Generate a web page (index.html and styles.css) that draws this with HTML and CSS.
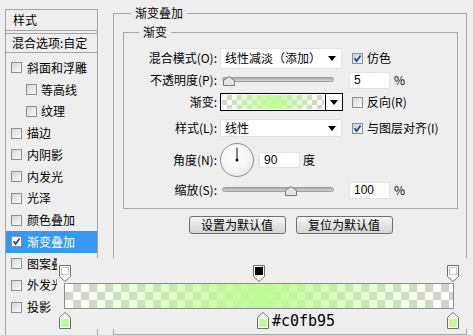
FILE: index.html
```html
<!DOCTYPE html>
<html lang="zh-CN">
<head>
<meta charset="utf-8">
<title>图层样式 - 渐变叠加</title>
<link rel="stylesheet" href="styles.css">
</head>
<body>
<div class="dialog">
  <div class="side">
    <div class="side-head">样式</div>
    <div class="side-blend">混合选项:自定</div>
    <ul class="fx-list">
      <li class="fx"><span class="cb"></span>斜面和浮雕</li>
      <li class="fx sub"><span class="cb"></span>等高线</li>
      <li class="fx sub"><span class="cb"></span>纹理</li>
      <li class="fx"><span class="cb"></span>描边</li>
      <li class="fx"><span class="cb"></span>内阴影</li>
      <li class="fx"><span class="cb"></span>内发光</li>
      <li class="fx"><span class="cb"></span>光泽</li>
      <li class="fx"><span class="cb"></span>颜色叠加</li>
      <li class="fx active"><span class="cb on"><svg viewBox="0 0 9 9"><path d="M1.5 4.3 L3.6 7 L7.6 1.6"/></svg></span>渐变叠加</li>
      <li class="fx"><span class="cb"></span>图案叠加</li>
      <li class="fx"><span class="cb"></span>外发光</li>
      <li class="fx"><span class="cb"></span>投影</li>
    </ul>
  </div>

  <div class="main">
    <fieldset class="group outer">
      <legend>渐变叠加</legend>
      <fieldset class="group inner">
        <legend>渐变</legend>
        <div class="form">
          <span class="lbl">混合模式(O):</span>
          <div class="select tall"><span>线性减淡（添加）</span><i class="caret"></i></div>
          <label class="check"><span class="cb on"><svg viewBox="0 0 9 9"><path d="M1.5 4.3 L3.6 7 L7.6 1.6"/></svg></span>仿色</label>

          <span class="lbl">不透明度(P):</span>
          <div class="slider"><div class="track"></div><span class="thumb" style="left:1px"><svg viewBox="0 0 12 10"><path d="M6 0.5 L11.5 4.5 V9.5 H0.5 V4.5 Z"/></svg></span></div>
          <div class="num"><span class="field">5</span><span class="unit">%</span></div>

          <span class="lbl">渐变:</span>
          <div class="grad-pick"><div class="grad-swatch"></div><div class="grad-arrow"><i class="caret"></i></div></div>
          <label class="check"><span class="cb"></span>反向(R)</label>

          <span class="lbl">样式(L):</span>
          <div class="select"><span>线性</span><i class="caret"></i></div>
          <label class="check"><span class="cb on"><svg viewBox="0 0 9 9"><path d="M1.5 4.3 L3.6 7 L7.6 1.6"/></svg></span>与图层对齐(I)</label>

          <span class="lbl">角度(N):</span>
          <div class="angle">
            <span class="dial"><svg viewBox="0 0 34 34"><line x1="17" y1="17" x2="17" y2="4"/><circle cx="17" cy="17" r="1.6"/></svg></span>
            <span class="field short">90</span><span class="unit">度</span>
          </div>
          <span></span>

          <span class="lbl">缩放(S):</span>
          <div class="slider"><div class="track"></div><span class="thumb" style="left:63px"><svg viewBox="0 0 12 10"><path d="M6 0.5 L11.5 4.5 V9.5 H0.5 V4.5 Z"/></svg></span></div>
          <div class="num"><span class="field">100</span><span class="unit">%</span></div>
        </div>
      </fieldset>
      <div class="buttons">
        <button class="btn" type="button">设置为默认值</button>
        <button class="btn" type="button">复位为默认值</button>
      </div>
    </fieldset>
  </div>
</div>

<div class="gx">
  <div class="gx-track">
    <div class="stops top">
      <span class="stop" style="left:calc(0% - 5px)"><svg viewBox="0 0 12 17"><path class="frame" d="M0.5 0.5 H11.5 V11.5 L6 16.5 L0.5 11.5 Z"/><rect class="fill-white" x="2.5" y="2.5" width="7" height="7"/></svg></span>
      <span class="stop" style="left:calc(50% - 6px)"><svg viewBox="0 0 12 17"><path class="frame" d="M0.5 0.5 H11.5 V11.5 L6 16.5 L0.5 11.5 Z"/><rect class="fill-black" x="2" y="2" width="8" height="8"/></svg></span>
      <span class="stop" style="left:calc(100% - 7px)"><svg viewBox="0 0 12 17"><path class="frame" d="M0.5 0.5 H11.5 V11.5 L6 16.5 L0.5 11.5 Z"/><rect class="fill-white" x="2.5" y="2.5" width="7" height="7"/></svg></span>
    </div>
    <div class="gbar"></div>
    <div class="stops bottom">
      <span class="stop" style="left:calc(0% - 5px)"><svg viewBox="0 0 12 17"><path class="frame" d="M6 0.5 L11.5 5.5 V16.5 H0.5 V5.5 Z"/><rect class="fill-green" x="2" y="7" width="8" height="8"/></svg></span>
      <span class="stop" style="left:calc(51% - 6px)"><svg viewBox="0 0 12 17"><path class="frame" d="M6 0.5 L11.5 5.5 V16.5 H0.5 V5.5 Z"/><rect class="fill-green" x="2" y="7" width="8" height="8"/></svg></span>
      <span class="stop" style="left:calc(100% - 7px)"><svg viewBox="0 0 12 17"><path class="frame" d="M6 0.5 L11.5 5.5 V16.5 H0.5 V5.5 Z"/><rect class="fill-green" x="2" y="7" width="8" height="8"/></svg></span>
      <span class="stop-label" style="left:calc(51% + 9px)">#c0fb95</span>
    </div>
  </div>
</div>
</body>
</html>
```

FILE: styles.css
```css
* { box-sizing: border-box; }

html, body {
  margin: 0;
  padding: 0;
}

body {
  position: relative;
  width: 473px;
  height: 335px;
  overflow: hidden;
  background: #eeeeee;
  color: #000;
  font-family: "Noto Sans CJK SC", "Noto Sans", sans-serif;
  font-size: 12px;
  line-height: 16px;
}

.dialog {
  display: flex;
  align-items: flex-start;
  padding-left: 5px;
}

/* ---------- left style list ---------- */
.side {
  width: 93px;
  height: 326px;
  margin-top: 9px;
  border-left: 1px solid #a3a3a3;
  border-right: 1px solid #a3a3a3;
  flex: none;
}

.side-head {
  height: 22px;
  padding-left: 7px;
  line-height: 20px;
  border-top: 1px solid #a3a3a3;
  border-bottom: 1px solid #a3a3a3;
}

.side-blend {
  height: 20px;
  margin-top: 2px;
  padding-left: 6px;
  line-height: 18px;
  white-space: nowrap;
  border-top: 1px solid #a3a3a3;
  border-bottom: 1px solid #a3a3a3;
}

.fx-list {
  list-style: none;
  margin: 4px 0 0;
  padding: 0;
}

.fx {
  display: flex;
  align-items: center;
  gap: 5px;
  height: 21.75px;
  padding-left: 5px;
  white-space: nowrap;
}

.fx.sub {
  padding-left: 20px;
  gap: 4px;
}

.fx.active {
  background: #3797f5;
  color: #fff;
}

/* ---------- checkboxes ---------- */
.cb {
  display: inline-flex;
  flex: none;
  width: 11px;
  height: 11px;
  border: 1px solid #8f8f8f;
  background: linear-gradient(135deg, #d6d6d6, #fbfbfb);
}

.cb.on {
  background: linear-gradient(135deg, #c9d3de, #f4f6f9);
}

.fx.active .cb {
  background: #fff;
}

.cb svg {
  width: 9px;
  height: 9px;
}

.cb svg path {
  fill: none;
  stroke: #27457f;
  stroke-width: 1.7;
}

/* ---------- main panel ---------- */
.main {
  width: 354px;
  margin-left: 15px;
  margin-top: 5px;
  flex: none;
}

fieldset.group {
  margin: 0;
  min-width: 0;
  border: 1px solid #a6a6a6;
}

.group > legend {
  padding: 0 4px;
  font-size: 12px;
  line-height: 16px;
}

.outer {
  height: 330px;
  padding: 3px 8px 0 9px;
  border-bottom: 0;
}

.outer > legend {
  margin-left: 8px;
}

.inner {
  padding: 7px 0 5px 0;
}

.inner > legend {
  margin-left: 15px;
}

.form {
  display: grid;
  grid-template-columns: 96px 129px 1fr;
  grid-template-rows: 22px 22px 22px 30px 34px 26px;
  align-items: center;
}

.lbl {
  padding-right: 3px;
  text-align: right;
  white-space: nowrap;
}

.select {
  display: flex;
  align-items: center;
  justify-content: space-between;
  width: 122px;
  height: 18px;
  padding: 0 5px 0 4px;
  background: #fff;
  border: 1px solid #e2e2e2;
  white-space: nowrap;
}

.select.tall {
  height: 21px;
}

.caret {
  display: block;
  width: 0;
  height: 0;
  border-left: 4px solid transparent;
  border-right: 4px solid transparent;
  border-top: 5px solid #000;
}

.check {
  display: flex;
  align-items: center;
  gap: 4px;
  padding-left: 3px;
  white-space: nowrap;
}

.num {
  display: flex;
  align-items: center;
}

.field {
  display: block;
  width: 41px;
  height: 17px;
  padding-left: 4px;
  line-height: 15px;
  background: #fff;
  border: 1px solid #e2e2e2;
  font-family: "Liberation Sans", "Noto Sans", sans-serif;
}

.field.short {
  height: 16px;
  line-height: 14px;
  margin-left: 5px;
}

.unit {
  margin-left: 4px;
}

.angle .unit {
  margin-left: 3px;
}

/* sliders */
.slider {
  position: relative;
  width: 112px;
  height: 14px;
  margin-left: 2px;
}

.track {
  height: 5px;
  margin-top: 4px;
  border: 1px solid #9d9d9d;
  border-radius: 3px;
  background: linear-gradient(#a8a8a8, #d6d6d6);
}

.thumb {
  position: absolute;
  top: 3px;
  width: 12px;
  height: 10px;
}

.thumb svg {
  display: block;
  width: 12px;
  height: 10px;
}

.thumb path {
  fill: #e4e4e4;
  stroke: #777;
  stroke-width: 1;
}

/* gradient picker */
.grad-pick {
  display: flex;
  width: 123px;
  height: 18px;
  border: 1px solid #000;
  background: #fff;
}

.grad-swatch {
  flex: 1;
  background-image:
    linear-gradient(to right, rgba(192, 251, 149, 0), #c0fb95 50%, rgba(192, 251, 149, 0)),
    linear-gradient(45deg, #d4d4d4 25%, transparent 25%, transparent 75%, #d4d4d4 75%),
    linear-gradient(45deg, #d4d4d4 25%, transparent 25%, transparent 75%, #d4d4d4 75%);
  background-size: 100% 100%, 10px 10px, 10px 10px;
  background-position: 0 0, 0 0, 5px 5px;
  background-color: #fff;
  border: 1px solid #fff;
}

.grad-arrow {
  display: flex;
  align-items: center;
  justify-content: center;
  width: 17px;
  border-left: 1px solid #000;
}

/* angle dial */
.angle {
  display: flex;
  align-items: center;
  white-space: nowrap;
}

.dial {
  display: block;
  width: 34px;
  height: 34px;
  border: 1px solid #8c8c8c;
  border-radius: 50%;
  background: radial-gradient(circle at 40% 35%, #ffffff 0%, #f4f4f4 55%, #dedede 100%);
  flex: none;
}

.dial svg {
  display: block;
  width: 32px;
  height: 32px;
}

.dial line {
  stroke: #222;
  stroke-width: 1.2;
}

.dial circle {
  fill: #111;
}

/* buttons */
.buttons {
  display: flex;
  justify-content: center;
  gap: 10px;
  margin-top: 7px;
}

.btn {
  width: 97px;
  height: 18px;
  padding: 0;
  font: inherit;
  line-height: 16px;
  color: #000;
  border: 1px solid #707070;
  border-radius: 3px;
  background: linear-gradient(#f7f7f7, #e3e3e3 50%, #d6d6d6);
}

/* ---------- gradient editor (overlays the panels) ---------- */
.gx {
  position: absolute;
  left: 57px;
  top: 258px;
  width: 416px;
  height: 71px;
  padding: 7px 0 0 7px;
  background: #eeeeee;
}

.gx-track {
  width: 390px;
}

.stops {
  position: relative;
  height: 18px;
}

.stops.bottom {
  height: 17px;
  margin-top: 3px;
}

.stop {
  position: absolute;
  top: 0;
  width: 12px;
  height: 17px;
}

.stop svg {
  display: block;
  width: 12px;
  height: 17px;
}

.stop .frame {
  fill: #fff;
  stroke: #6e6e6e;
  stroke-width: 1;
}

.fill-white { fill: #fff; stroke: #c8c8c8; stroke-width: 1; }
.fill-black { fill: #000; }
.fill-green { fill: #c0fb95; }

.stop-label {
  position: absolute;
  top: 1px;
  font-family: "DejaVu Sans Mono", "Liberation Mono", monospace;
  font-size: 15px;
  line-height: 17px;
  white-space: nowrap;
}

.gbar {
  height: 26px;
  border: 1px solid #8e8e8e;
  background-image:
    linear-gradient(to right, rgba(192, 251, 149, 0), #c0fb95 50%, rgba(192, 251, 149, 0)),
    linear-gradient(45deg, #d2d2d2 25%, transparent 25%, transparent 75%, #d2d2d2 75%),
    linear-gradient(45deg, #d2d2d2 25%, transparent 25%, transparent 75%, #d2d2d2 75%);
  background-size: 100% 100%, 16px 16px, 16px 16px;
  background-position: 0 0, 0 0, 8px 8px;
  background-color: #fff;
}
```
